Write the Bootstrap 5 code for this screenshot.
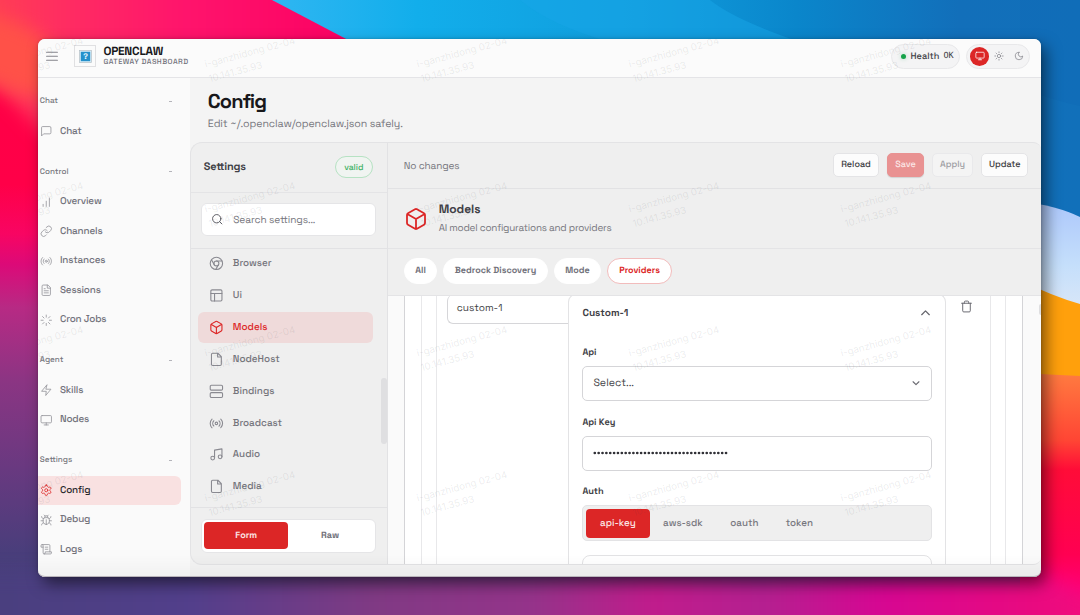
<!DOCTYPE html>
<html lang="en">
<head>
    <meta charset="utf-8">
    <title>OpenClaw Gateway Dashboard</title>
    <link href="https://cdn.jsdelivr.net/npm/bootstrap@5.3.0/dist/css/bootstrap.min.css" rel="stylesheet">
    <style>
        body {
            width: 1080px;
            height: 615px;
            overflow: hidden;
            padding: 38.7px 38.4px;
            font-family: "Space Grotesk", Inter, sans-serif;
            font-size: 10px;
            line-height: 1.3;
            color: #3f3f46;
            background: #ff0045;
            text-rendering: geometricPrecision;
        }

        svg { display: block; flex-shrink: 0; }
        .ico { fill: none; stroke: currentColor; stroke-width: 1.8; stroke-linecap: round; stroke-linejoin: round; }

        .wallpaper { position: absolute; inset: 0; z-index: -1; }

        .window {
            width: 1003.1px;
            height: 538.1px;
            border-radius: 7px;
            background: #f4f4f4;
            box-shadow: 5px 7px 15px rgba(0, 0, 0, .5), 0 0 3px rgba(0, 0, 0, .2);
        }
        .window::after {
            content: "";
            position: absolute;
            inset: auto 0 0 0;
            height: 22px;
            border-bottom: 1px solid #b9b4ba;
            border-radius: 0 0 7px 7px;
            background: linear-gradient(transparent, rgba(0, 0, 0, .035));
        }

        /* top bar */
        .topbar { height: 39.2px; background: #fbfbfb; border-bottom: 1px solid #e4e4e7; padding: 0 11px 3px 8px; }
        .logo-box { width: 22px; height: 22px; border: 1px solid #e0e0e2; margin-left: 16px; margin-right: 7px; }
        .brand-name { font-size: 11.8px; font-weight: 700; letter-spacing: -.22px; line-height: 12px; margin-top: 1px; color: #18181b; }
        .brand-sub { font-size: 7.4px; font-weight: 500; letter-spacing: .46px; line-height: 10px; color: #71717a; }
        .pill { height: 25px; border: 1px solid #e8e8ea; border-radius: 13px; background: #f4f4f5; }
        .health { width: 69px; padding: 1px 0 0 9px; font-size: 9.2px; font-weight: 500; gap: 4px; }
        .health code { font-family: "DejaVu Sans Mono", monospace; font-size: 8.5px; color: #3f3f46; }
        .dot { width: 5px; height: 5px; border-radius: 50%; background: #16a34a; box-shadow: 0 0 4px rgba(22, 163, 74, .3); }
        .themes { width: 64px; padding-left: 2.3px; color: #85858c; }
        .themes span { width: 19.6px; height: 19px; border-radius: 50%; display: grid; place-items: center; }
        .themes .on { background: #dc2626; color: #fff; }

        /* side navigation */
        .side { width: 151.4px; background: #fafafa; padding: 11.4px 9px 0 0; }
        .side-label { height: 24px; padding: 0 8.5px 0 1.4px; margin-bottom: 3.75px; font-size: 8.1px; font-weight: 500; color: #76767d; }
        .side-label i { width: 3.5px; height: 1px; background: #b4b4ba; }
        .side-group { margin-bottom: 14.3px; }
        .side-item { height: 28.5px; margin-bottom: 1px; padding-left: 1.9px; gap: 7.2px; font-size: 9.9px; font-weight: 500; letter-spacing: -.16px; color: #71717a; border-radius: 0 6px 6px 0; }
        .side-item svg { color: #96969c; stroke-width: 1.6; }
        .side-item.on { background: #f9e1e1; color: #27272a; }
        .side-item.on svg { color: #dc2626; }

        /* page head */
        .page-head { height: 64.1px; padding: 11px 0 0 18px; }
        .page-head h1 { font-size: 20px; font-weight: 700; letter-spacing: -.85px; line-height: 24px; margin: 0; color: #18181b; }
        .page-head p { font-size: 10.6px; line-height: 14px; letter-spacing: -.1px; margin: 5.4px 0 0; color: #76767d; }

        .panel { height: 423.3px; border: 1px solid #e3e3e5; border-right: 0; border-radius: 12px 8px 8px 12px; background: #efefef; overflow: hidden; }

        /* settings column */
        .sets { width: 197px; border-right: 1px solid #e2e2e4; position: relative; }
        .sets-head { height: 49.8px; padding: 0 14px 0 13px; border-bottom: 1px solid #e4e4e6; font-size: 10.9px; font-weight: 600; letter-spacing: -.18px; }
        .valid { width: 38px; height: 22px; border: 1px solid #b6e2c3; border-radius: 11px; color: #3fb265; font-size: 8.6px; font-weight: 500; letter-spacing: -.05px; background: #f0f4f1; }
        .search-row { height: 56px; padding: 10.4px 11px 0 10px; border-bottom: 1px solid #e2e2e4; }
        .search-box { height: 33px; border: 1px solid #e5e5e7; border-radius: 6px; background: #fff; padding: 0 0 1px 9.6px; gap: 9.4px; font-size: 10.1px; letter-spacing: -.08px; color: #76767d; }
        .set-list { height: 259.6px; overflow: hidden; padding: 0 13.5px 0 7px; border-bottom: 1px solid #e2e2e4; }
        .set-item { height: 31.85px; padding-left: 11.1px; gap: 9.2px; border-radius: 6px; font-size: 9.9px; font-weight: 500; color: #74747b; }
        .set-item:first-child { margin-top: -.9px; }
        .set-item svg { color: #8a8a91; }
        .set-item.on, .set-item.on svg { color: #dc2626; }
        .set-item.on { background: #efdada; }
        .scroll-thumb { position: absolute; right: 0; top: 235px; width: 6px; height: 66px; border-radius: 3px; background: #dfdfe1; }
        .mode-row { padding: 10.6px 11px 0 10px; }
        .mode-switch { height: 34px; border: 1px solid #e5e5e7; border-radius: 6px; background: #fff; padding: 2.5px; font-size: 9.1px; font-weight: 600; color: #71717a; }
        .mode-switch span { width: 83.9px; border-radius: 4px; padding-top: .8px; display: grid; place-items: center; }
        .mode-switch .on { background: #dc2626; color: #fbe3e3; }

        /* editor */
        .toolbar { height: 46.1px; padding: 0 13px 1px 16px; border-bottom: 1px solid #e2e2e4; font-size: 10px; letter-spacing: -.14px; color: #76767d; gap: 8px; }
        .tool { height: 24.6px; padding-top: .5px; border: 1px solid #e4e4e6; border-radius: 5px; background: #fcfcfc; color: #3a3a40; font-size: 9px; letter-spacing: 0; font-weight: 500; display: grid; place-items: center; }
        .tool.save { background: #e99292; border-color: #e99292; color: #fbe6e6; box-shadow: 0 1px 1px rgba(0, 0, 0, .12); }
        .tool.off { background: #f4f4f4; border-color: #e9e9eb; color: #9d9da2; }
        .hero { height: 60.1px; padding: 0 0 0 16px; gap: 11px; border-bottom: 1px solid #e4e4e6; }
        .hero h2 { font-size: 12px; font-weight: 600; line-height: 15px; letter-spacing: -.05px; margin: 0 0 3.6px; color: #3f3f46; }
        .hero p { font-size: 9.9px; line-height: 14px; letter-spacing: -.22px; margin: 0; color: #76767d; }
        .tabs { height: 46.5px; padding: 0 0 1.5px 16px; gap: 6px; border-bottom: 1px solid #e4e4e6; }
        .tab { height: 26px; border: 1px solid #fff; border-radius: 13px; background: #fff; color: #71717a; font-size: 9px; font-weight: 600; display: grid; place-items: center; }
        .tab.on { border-color: #f2bcbc; color: #dc2626; }

        .canvas-area { height: 270px; background: #fafafa; padding: 0 18.6px 0 16px; position: relative; }
        .canvas-area::after { content: ""; position: absolute; right: 0; top: 8px; width: 2px; height: 11px; background: #dedee0; border-radius: 2px 0 0 2px; }
        .nest { background: #fff; border: solid #e8e8ea; border-width: 0 1px; height: 100%; }
        .nest-1 { border-color: #d4d4d7; padding: 0 16px; overflow: hidden; }
        .nest-2 { padding: 0 14px; }
        .nest-3 { padding-left: 10px; }
        .key-input { width: 121.6px; height: 29.3px; border: 1px solid #d6d6d9; border-width: 0 0 1px 1px; border-radius: 6px 0 0 6px; padding: 6.5px 0 0 9px; margin-top: -.8px; font-size: 10.1px; }
        .entry { width: 377.5px; border: 1px solid #e3e3e5; border-bottom: 0; border-radius: 8px 8px 0 0; padding: 0 13px; margin-top: -1.6px; }
        .entry-head { height: 36px; font-size: 10.1px; font-weight: 600; padding-bottom: .5px; }
        .f-label { font-size: 9.2px; font-weight: 600; line-height: 12px; }
        .field { height: 34.8px; border: 1px solid #d5d5d8; border-radius: 5px; margin: 8px 0 14.9px; padding: 0 10px; font-size: 10.6px; }
        .seg { height: 36px; border: 1px solid #e3e3e5; border-radius: 5px; background: #efefef; margin-top: 8px; padding: 2.5px; font-size: 9.8px; font-weight: 500; color: #76767d; }
        .seg span { display: grid; place-items: center; border-radius: 4px; }
        .seg .on { background: #dc2626; color: #fbe6e6; }
        .next-box { height: 20px; margin-top: 14px; border: 1px solid #e2e2e4; border-radius: 8px 8px 0 0; }
        .trash { margin: 4.2px 0 0 14px; color: #68686f; }

        .stamps { position: absolute; inset: 0; overflow: hidden; border-radius: 7px; pointer-events: none; z-index: 3; }
        .stamp { position: absolute; font: 9.8px/14.6px Inter, sans-serif; color: rgba(60, 60, 70, .1); white-space: pre; transform: rotate(-15deg); transform-origin: 0 100%; }
    </style>
</head>
<body>
    <svg class="wallpaper" width="1080" height="615" viewBox="0 0 1080 615" preserveAspectRatio="none">
        <defs>
            <linearGradient id="gLeft" x1="0" y1="0" x2="0" y2="1">
                <stop offset="0" stop-color="#ff0045"/><stop offset=".3" stop-color="#ff0048"/>
                <stop offset=".38" stop-color="#f80562"/><stop offset=".43" stop-color="#dc0a78"/>
                <stop offset=".5" stop-color="#b72a84"/><stop offset=".62" stop-color="#8b3583"/>
                <stop offset=".76" stop-color="#693980"/><stop offset=".9" stop-color="#493e7b"/><stop offset="1" stop-color="#483f7e"/>
            </linearGradient>
            <linearGradient id="gTop" x1="0" y1="0" x2="1" y2="0">
                <stop offset="0" stop-color="#ff4350"/><stop offset=".25" stop-color="#ff2c62"/><stop offset=".55" stop-color="#ff146c"/><stop offset="1" stop-color="#fb0062"/>
            </linearGradient>
            <linearGradient id="gBlue" gradientUnits="userSpaceOnUse" x1="272" y1="0" x2="1080" y2="0">
                <stop offset="0" stop-color="#2fb6f2"/><stop offset=".18" stop-color="#12aeeb"/><stop offset=".45" stop-color="#109ddd"/>
                <stop offset=".65" stop-color="#0a86cb"/><stop offset=".85" stop-color="#126fba"/><stop offset="1" stop-color="#1170ba"/>
            </linearGradient>
            <linearGradient id="gSky" x1="0" y1="0" x2="0" y2="1">
                <stop offset="0" stop-color="#acc7fb"/><stop offset=".5" stop-color="#c5dffb"/><stop offset="1" stop-color="#e2eaf6"/>
            </linearGradient>
            <linearGradient id="gRed" x1="0" y1="0" x2="0" y2="1">
                <stop offset="0" stop-color="#ff7b40"/><stop offset=".28" stop-color="#ff4534"/><stop offset=".4" stop-color="#ff0c38"/>
                <stop offset=".75" stop-color="#ff0052"/><stop offset=".9" stop-color="#ff0078"/><stop offset="1" stop-color="#f0107e"/>
            </linearGradient>
            <linearGradient id="gBottom" x1="0" y1="0" x2="1" y2="0">
                <stop offset="0" stop-color="#483f7c"/><stop offset=".2" stop-color="#523f8b"/><stop offset=".36" stop-color="#803a84"/>
                <stop offset=".5" stop-color="#95338a"/><stop offset=".6" stop-color="#c01c8c"/><stop offset=".7" stop-color="#b42090"/><stop offset=".8" stop-color="#d60792"/>
                <stop offset=".93" stop-color="#e80a80"/><stop offset="1" stop-color="#f60c7c"/>
            </linearGradient>
            <filter id="soft" x="-20%" y="-50%" width="140%" height="200%" color-interpolation-filters="sRGB"><feGaussianBlur stdDeviation="9"/></filter>
        </defs>
        <rect width="1080" height="615" fill="url(#gLeft)"/>
        <path d="M-30-30H360V150H60L0 88L-30 70Z" fill="url(#gTop)" filter="url(#soft)"/>
        <ellipse cx="10" cy="55" rx="65" ry="32" fill="#ff5148" filter="url(#soft)" transform="rotate(28 10 55)"/>
        <path d="M272 0H1080V230H900L350 41Z" fill="url(#gBlue)"/>
        <path d="M520 0H710Q735 20 800 42H610Q550 25 520 0Z" fill="#17a6e7" opacity=".5"/>
        <path d="M1020 88Q1060 102 1080 106V0H1020Z" fill="#0f5fae" opacity=".15"/>
        <path d="M1020 201Q1058 206 1080 217V330H1020Z" fill="url(#gSky)"/>
        <path d="M1020 280Q1052 296 1080 304V390H1020Z" fill="#ffa00c"/>
        <path d="M1020 373L1080 376V615H1020Z" fill="url(#gRed)"/>
        <path d="M-40 574H1041L1110 610V650H-40Z" fill="url(#gBottom)" filter="url(#soft)"/>
    </svg>

    <svg width="0" height="0" class="position-absolute">
        <symbol id="chat" viewBox="0 0 24 24"><path d="M21 15a2 2 0 0 1-2 2H7l-4 4V5a2 2 0 0 1 2-2h14a2 2 0 0 1 2 2z"/></symbol>
        <symbol id="bars" viewBox="0 0 24 24"><path d="M12 20V10M18 20V4M6 20v-4"/></symbol>
        <symbol id="link" viewBox="0 0 24 24"><path d="M10 13a5 5 0 0 0 7.54.54l3-3a5 5 0 0 0-7.07-7.07l-1.72 1.71M14 11a5 5 0 0 0-7.54-.54l-3 3a5 5 0 0 0 7.07 7.07l1.71-1.71"/></symbol>
        <symbol id="radio" viewBox="0 0 24 24"><circle cx="12" cy="12" r="2"/><path d="M4.9 19.1C1 15.2 1 8.8 4.9 4.9M7.8 16.2c-2.3-2.3-2.3-6.1 0-8.5M16.2 7.8c2.3 2.3 2.3 6.1 0 8.5M19.1 4.9C23 8.8 23 15.1 19.1 19"/></symbol>
        <symbol id="doc" viewBox="0 0 24 24"><path d="M14.5 2H6a2 2 0 0 0-2 2v16a2 2 0 0 0 2 2h12a2 2 0 0 0 2-2V7.5zM14 2v6h6M16 13H8M16 17H8M10 9H8"/></symbol>
        <symbol id="file" viewBox="0 0 24 24"><path d="M14.5 2H6a2 2 0 0 0-2 2v16a2 2 0 0 0 2 2h12a2 2 0 0 0 2-2V7.5zM14 2v6h6"/></symbol>
        <symbol id="loader" viewBox="0 0 24 24"><path d="M12 2v4M12 18v4M4.93 4.93l2.83 2.83M16.24 16.24l2.83 2.83M2 12h4M18 12h4M4.93 19.07l2.83-2.83M16.24 7.76l2.83-2.83"/></symbol>
        <symbol id="zap" viewBox="0 0 24 24"><path d="M13 2 3 14h9l-1 8 10-12h-9z"/></symbol>
        <symbol id="monitor" viewBox="0 0 24 24"><rect x="2" y="3" width="20" height="14" rx="2"/><path d="M8 21h8M12 17v4"/></symbol>
        <symbol id="gear" viewBox="0 0 24 24"><path d="M12.22 2h-.44a2 2 0 0 0-2 2v.18a2 2 0 0 1-1 1.73l-.43.25a2 2 0 0 1-2 0l-.15-.08a2 2 0 0 0-2.73.73l-.22.38a2 2 0 0 0 .73 2.73l.15.1a2 2 0 0 1 1 1.72v.51a2 2 0 0 1-1 1.74l-.15.09a2 2 0 0 0-.73 2.73l.22.38a2 2 0 0 0 2.73.73l.15-.08a2 2 0 0 1 2 0l.43.25a2 2 0 0 1 1 1.73V20a2 2 0 0 0 2 2h.44a2 2 0 0 0 2-2v-.18a2 2 0 0 1 1-1.73l.43-.25a2 2 0 0 1 2 0l.15.08a2 2 0 0 0 2.73-.73l.22-.39a2 2 0 0 0-.73-2.73l-.15-.08a2 2 0 0 1-1-1.74v-.5a2 2 0 0 1 1-1.74l.15-.09a2 2 0 0 0 .73-2.73l-.22-.38a2 2 0 0 0-2.73-.73l-.15.08a2 2 0 0 1-2 0l-.43-.25a2 2 0 0 1-1-1.73V4a2 2 0 0 0-2-2z"/><circle cx="12" cy="12" r="3"/></symbol>
        <symbol id="bug" viewBox="0 0 24 24"><path d="m8 2 1.88 1.88M14.12 3.88 16 2M9 7.13v-1a3 3 0 1 1 6 0v1M12 20c-3.3 0-6-2.7-6-6v-3a4 4 0 0 1 4-4h4a4 4 0 0 1 4 4v3c0 3.3-2.7 6-6 6M12 20v-9M6.53 9C4.6 8.8 3 7.1 3 5M6 13H2M3 21c0-2.1 1.7-3.9 3.8-4M20.97 5c0 2.1-1.6 3.8-3.5 4M22 13h-4M17.2 17c2.1.1 3.8 1.9 3.8 4"/></symbol>
        <symbol id="scroll" viewBox="0 0 24 24"><path d="M8 21h12a2 2 0 0 0 2-2v-2H10v2a2 2 0 1 1-4 0V5a2 2 0 1 0-4 0v3h4M19 17V5a2 2 0 0 0-2-2H4M15 8h-5M15 12h-5"/></symbol>
        <symbol id="search" viewBox="0 0 24 24"><circle cx="11" cy="11" r="8"/><path d="m21 21-4.35-4.35"/></symbol>
        <symbol id="chrome" viewBox="0 0 24 24"><circle cx="12" cy="12" r="10"/><circle cx="12" cy="12" r="4"/><path d="M21.17 8H12M3.95 6.06 8.54 14M10.88 21.94 15.46 14"/></symbol>
        <symbol id="layout" viewBox="0 0 24 24"><rect x="3" y="3" width="18" height="18" rx="2"/><path d="M3 9h18M9 21V9"/></symbol>
        <symbol id="cube" viewBox="0 0 24 24"><path d="M21 16V8a2 2 0 0 0-1-1.73l-7-4a2 2 0 0 0-2 0l-7 4A2 2 0 0 0 3 8v8a2 2 0 0 0 1 1.73l7 4a2 2 0 0 0 2 0l7-4A2 2 0 0 0 21 16zM3.27 6.96 12 12.01l8.73-5.05M12 22.08V12"/></symbol>
        <symbol id="server" viewBox="0 0 24 24"><rect x="2" y="2" width="20" height="8" rx="2"/><rect x="2" y="14" width="20" height="8" rx="2"/></symbol>
        <symbol id="music" viewBox="0 0 24 24"><path d="M9 18V5l12-2v13"/><circle cx="6" cy="18" r="3"/><circle cx="18" cy="16" r="3"/></symbol>
        <symbol id="sun" viewBox="0 0 24 24"><circle cx="12" cy="12" r="4"/><path d="M12 2v2M12 20v2M4.93 4.93l1.41 1.41M17.66 17.66l1.41 1.41M2 12h2M20 12h2M6.34 17.66l-1.41 1.41M19.07 4.93l-1.41 1.41"/></symbol>
        <symbol id="moon" viewBox="0 0 24 24"><path d="M12 3a6 6 0 0 0 9 9 9 9 0 1 1-9-9z"/></symbol>
        <symbol id="trash" viewBox="0 0 24 24"><path d="M3 6h18M19 6v14a2 2 0 0 1-2 2H7a2 2 0 0 1-2-2V6M8 6V4a2 2 0 0 1 2-2h4a2 2 0 0 1 2 2v2"/></symbol>
        <symbol id="up" viewBox="0 0 24 24"><path stroke-width="2.4" d="m5 16 7-7 7 7"/></symbol>
        <symbol id="down" viewBox="0 0 24 24"><path stroke-width="2.6" d="m5 9 7 7 7-7"/></symbol>
    </svg>

    <div class="window position-relative">
        <header class="topbar d-flex align-items-center" style="border-radius:7px 7px 0 0">
            <svg class="ico" width="12" height="13" viewBox="0 0 12 13" style="color:#85858c"><path stroke-width="1.1" d="M.6 2.2h10.8M.6 6.2h10.8M.6 10.2h10.8"/></svg>
            <div class="logo-box d-grid" style="place-items:center">
                <svg width="13" height="13" viewBox="0 0 13 13">
                    <rect x=".5" y=".5" width="12" height="12" fill="#d8edf8" stroke="#b5bfc6" stroke-width=".7"/>
                    <rect x="1.8" y="1.8" width="9.4" height="9.4" fill="#2591cb"/>
                    <text x="6.5" y="9.4" text-anchor="middle" font-size="8" font-weight="700" fill="#e9f7ff">?</text>
                </svg>
            </div>
            <div>
                <div class="brand-name">OPENCLAW</div>
                <div class="brand-sub">GATEWAY DASHBOARD</div>
            </div>
            <div class="pill health d-flex align-items-center ms-auto"><span class="dot"></span>Health <code>OK</code></div>
            <div class="pill themes d-flex align-items-center" style="margin-left:6px">
                <span class="on"><svg class="ico" width="10" height="10"><use href="#monitor"/></svg></span>
                <span><svg class="ico" width="10" height="10"><use href="#sun"/></svg></span>
                <span><svg class="ico" width="10" height="10"><use href="#moon"/></svg></span>
            </div>
        </header>

        <div class="d-flex overflow-hidden" style="height:498.7px;border-radius:0 0 7px 7px">
            <nav class="side" id="side"></nav>

            <main class="flex-grow-1">
                <div class="page-head">
                    <h1>Config</h1>
                    <p>Edit ~/.openclaw/openclaw.json safely.</p>
                </div>

                <div class="panel d-flex">
                    <aside class="sets">
                        <div class="sets-head d-flex align-items-center justify-content-between">Settings
                            <span class="valid d-flex align-items-center justify-content-center">valid</span>
                        </div>
                        <div class="search-row">
                            <div class="search-box d-flex align-items-center">
                                <svg class="ico" width="12.5" height="12.5" style="color:#55555c"><use href="#search"/></svg>Search settings...
                            </div>
                        </div>
                        <div class="set-list" id="setList"></div>
                        <div class="mode-row">
                            <div class="mode-switch d-flex"><span class="on">Form</span><span>Raw</span></div>
                        </div>
                        <div class="scroll-thumb"></div>
                    </aside>

                    <section class="flex-grow-1">
                        <div class="toolbar d-flex align-items-center">
                            <span class="me-auto">No changes</span>
                            <span class="tool" style="width:46px">Reload</span>
                            <span class="tool save" style="width:37px">Save</span>
                            <span class="tool off" style="width:41px">Apply</span>
                            <span class="tool" style="width:47.5px">Update</span>
                        </div>
                        <div class="hero d-flex align-items-center">
                            <svg class="ico" width="24" height="24" style="color:#dc2626"><use href="#cube"/></svg>
                            <div>
                                <h2>Models</h2>
                                <p>AI model configurations and providers</p>
                            </div>
                        </div>
                        <div class="tabs d-flex align-items-center">
                            <span class="tab" style="width:33.5px">All</span>
                            <span class="tab" style="width:104.5px">Bedrock Discovery</span>
                            <span class="tab" style="width:47.5px">Mode</span>
                            <span class="tab on" style="width:64.5px">Providers</span>
                        </div>
                        <div class="canvas-area">
                            <div class="nest nest-1"><div class="nest nest-2"><div class="nest nest-3 d-flex">
                                <div class="key-input">custom-1</div>
                                <div class="entry">
                                    <div class="entry-head d-flex align-items-center justify-content-between">Custom-1
                                        <svg class="ico" width="13" height="13" style="color:#68686f"><use href="#up"/></svg>
                                    </div>
                                    <div class="f-label" style="margin-top:15px">Api</div>
                                    <div class="field d-flex align-items-center justify-content-between">Select...
                                        <svg class="ico" width="10" height="10" style="color:#68686f"><use href="#down"/></svg>
                                    </div>
                                    <div class="f-label">Api Key</div>
                                    <div class="field d-flex align-items-center">
                                        <svg width="140" height="4"><path d="M1.8 2H134" fill="none" stroke="#303036" stroke-width="2.7" stroke-linecap="round" stroke-dasharray="0 3.86"/></svg>
                                    </div>
                                    <div class="f-label">Auth</div>
                                    <div class="seg d-flex">
                                        <span class="on" style="width:64px">api-key</span>
                                        <span style="width:66px">aws-sdk</span>
                                        <span style="width:57px">oauth</span>
                                        <span style="width:53px">token</span>
                                    </div>
                                    <div class="next-box"></div>
                                </div>
                                <svg class="ico trash" width="13" height="13"><use href="#trash"/></svg>
                            </div></div></div>
                        </div>
                    </section>
                </div>
            </main>
        </div>
        <div class="stamps" id="stamps"></div>
    </div>

    <script src="https://cdn.jsdelivr.net/npm/bootstrap@5.3.0/dist/js/bootstrap.bundle.min.js"></script>
    <script>
        const groups = {
            Chat: [['chat', 'Chat']],
            Control: [['bars', 'Overview'], ['link', 'Channels'], ['radio', 'Instances'], ['doc', 'Sessions'], ['loader', 'Cron Jobs']],
            Agent: [['zap', 'Skills'], ['monitor', 'Nodes']],
            Settings: [['gear', 'Config'], ['bug', 'Debug'], ['scroll', 'Logs']]
        };
        const sections = [['chrome', 'Browser'], ['layout', 'Ui'], ['cube', 'Models'], ['file', 'NodeHost'],
            ['server', 'Bindings'], ['radio', 'Broadcast'], ['music', 'Audio'], ['file', 'Media']];

        function item(cls, size, [icon, label], active) {
            return `<div class="${cls} d-flex align-items-center ${label === active ? 'on' : ''}">
                <svg class="ico" width="${size}" height="${size}"><use href="#${icon}"/></svg>${label}</div>`;
        }

        document.getElementById('side').innerHTML = Object.entries(groups).map(([name, items]) =>
            `<div class="side-group">
                <div class="side-label d-flex align-items-center justify-content-between">${name}<i></i></div>
                ${items.map(i => item('side-item', 12.5, i, 'Config')).join('')}
            </div>`).join('');

        document.getElementById('setList').innerHTML = sections.map(i => item('set-item', 14.8, i, 'Models')).join('');

        // repeated user stamp over the whole window
        let stamps = '';
        for (let row = 0; row < 4; row++) {
            for (let col = 0; col < 5; col++) {
                stamps += `<div class="stamp" style="left:${-39 + col * 212}px;top:${19.5 + row * 144.6}px">i-ganzhidong 02-04\n10.141.35.93</div>`;
            }
        }
        document.getElementById('stamps').innerHTML = stamps;
    </script>
</body>
</html>
